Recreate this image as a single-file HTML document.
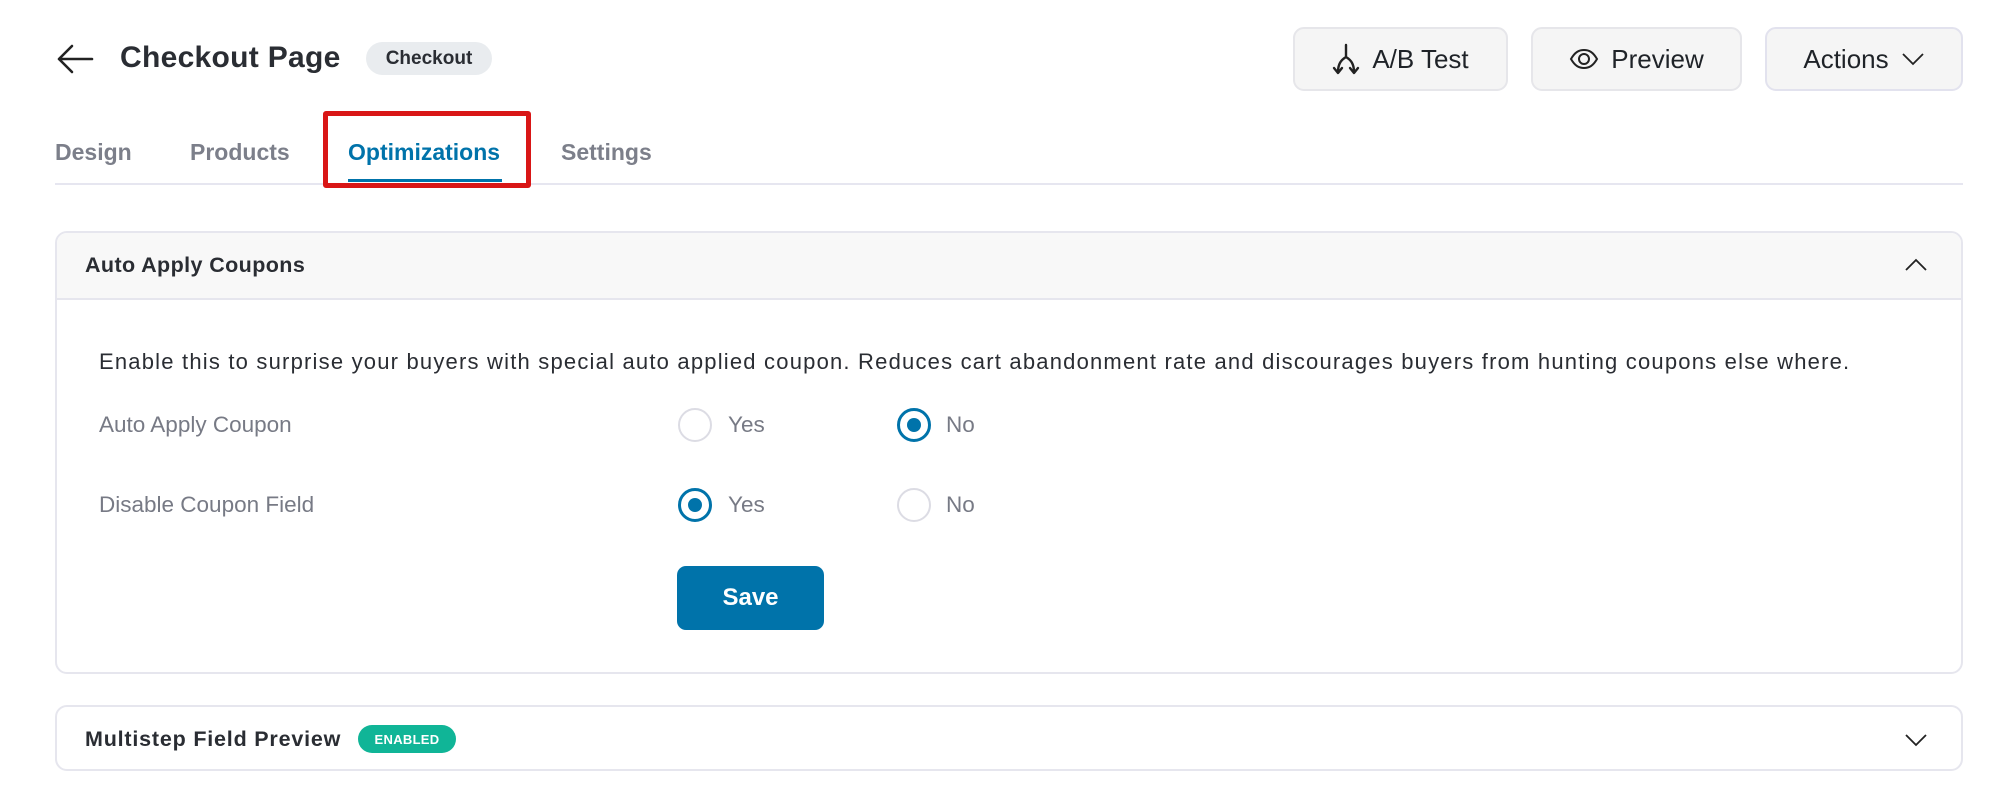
<!DOCTYPE html>
<html><head><meta charset="utf-8"><style>
*{box-sizing:border-box;margin:0;padding:0}
body{width:1999px;height:796px;background:#fff;font-family:"Liberation Sans",sans-serif;position:relative;overflow:hidden;color:#1f2328}
.a{position:absolute}
.btn{position:absolute;top:27px;height:64px;background:#f5f5f5;border:2px solid #e6e6ea;border-radius:11px;display:flex;align-items:center;justify-content:center;font-size:26px;color:#1f2328;gap:12px}
.tab{position:absolute;top:139px;font-size:23px;color:#7c7f8a;font-weight:600}
.radio{position:absolute;width:34px;height:34px;border-radius:50%;border:2px solid #dcdce4;background:#fff}
.radio.on{border:3px solid #0073aa}
.radio.on::after{content:"";position:absolute;left:7px;top:7px;width:14px;height:14px;border-radius:50%;background:#0073aa}
.lbl{position:absolute;font-size:22.5px;color:#777a85}
.opt{position:absolute;font-size:22.5px;color:#777a85}
</style></head><body>
<svg class="a" style="left:56px;top:44px" width="38" height="30" viewBox="0 0 38 30"><path d="M36 15H3M16 2L3 15l13 13" fill="none" stroke="#222" stroke-width="2.6" stroke-linecap="round" stroke-linejoin="round"/></svg>
<div class="a" style="left:120px;top:41px;font-size:30px;font-weight:600;color:#2a2d33;letter-spacing:0.3px">Checkout Page</div>
<div class="a" style="left:366px;top:42px;width:126px;height:33px;border-radius:17px;background:#e9ecef;font-size:19px;font-weight:600;color:#2a2d33;display:flex;align-items:center;justify-content:center">Checkout</div>

<div class="btn" style="left:1293px;width:215px"><svg width="28" height="32" viewBox="0 0 28 32"><path d="M14 2v12M14 14c-5 3-8 7-8 15M14 14c5 3 8 7 8 15M2 25l4 5 4-5M18 25l4 5 4-5" fill="none" stroke="#222" stroke-width="2.4" stroke-linecap="round" stroke-linejoin="round"/></svg>A/B Test</div>
<div class="btn" style="left:1531px;width:211px"><svg width="30" height="22" viewBox="0 0 30 22"><path d="M2 11C6 4 10 2 15 2s9 2 13 9c-4 7-8 9-13 9S6 18 2 11z" fill="none" stroke="#222" stroke-width="2"/><circle cx="15" cy="11" r="5" fill="none" stroke="#222" stroke-width="2"/></svg>Preview</div>
<div class="btn" style="left:1765px;width:198px;border-color:#e2e2ee">Actions <svg width="24" height="14" viewBox="0 0 24 14"><path d="M2 2l10 10L22 2" fill="none" stroke="#222" stroke-width="1.8"/></svg></div>

<div class="tab" style="left:55px">Design</div>
<div class="tab" style="left:190px">Products</div>
<div class="tab" style="left:348px;color:#0073aa">Optimizations</div>
<div class="tab" style="left:561px">Settings</div>
<div class="a" style="left:55px;top:183px;width:1908px;height:2px;background:#e6e6f0"></div>
<div class="a" style="left:348px;top:179px;width:154px;height:3px;background:#0073aa"></div>
<div class="a" style="left:323px;top:111px;width:208px;height:77px;border:5px solid #d91616;border-radius:3px"></div>

<div class="a" style="left:55px;top:231px;width:1908px;height:443px;border:2px solid #e6e6ee;border-radius:12px;overflow:hidden">
  <div style="height:67px;background:#f8f8f8;border-bottom:2px solid #e6e6ee"></div>
</div>
<div class="a" style="left:85px;top:253px;font-size:21.5px;font-weight:600;color:#2a2d33;letter-spacing:0.4px">Auto Apply Coupons</div>
<svg class="a" style="left:1904px;top:258px" width="24" height="14" viewBox="0 0 24 14"><path d="M2 12L12 2l10 10" fill="none" stroke="#222" stroke-width="1.8"/></svg>

<div class="a" style="left:99px;top:349px;font-size:22px;letter-spacing:1.2px;color:#2a2d33;white-space:nowrap">Enable this to surprise your buyers with special auto applied coupon. Reduces cart abandonment rate and discourages buyers from hunting coupons else where.</div>

<div class="lbl" style="left:99px;top:412px">Auto Apply Coupon</div>
<div class="radio" style="left:678px;top:408px"></div><div class="opt" style="left:728px;top:412px">Yes</div>
<div class="radio on" style="left:897px;top:408px"></div><div class="opt" style="left:946px;top:412px">No</div>

<div class="lbl" style="left:99px;top:492px">Disable Coupon Field</div>
<div class="radio on" style="left:678px;top:488px"></div><div class="opt" style="left:728px;top:492px">Yes</div>
<div class="radio" style="left:897px;top:488px"></div><div class="opt" style="left:946px;top:492px">No</div>

<div class="a" style="left:677px;top:566px;width:147px;height:64px;background:#0073aa;border-radius:9px;color:#fff;font-size:24px;font-weight:700;display:flex;align-items:center;justify-content:center">Save</div>

<div class="a" style="left:55px;top:705px;width:1908px;height:66px;border:2px solid #e6e6ee;border-radius:12px"></div>
<div class="a" style="left:85px;top:727px;font-size:21.5px;font-weight:600;color:#2a2d33;letter-spacing:0.8px">Multistep Field Preview</div>
<div class="a" style="left:358px;top:725px;width:98px;height:28px;border-radius:14px;background:#10b597;color:#fff;font-size:13px;font-weight:700;display:flex;align-items:center;justify-content:center;letter-spacing:.3px">ENABLED</div>
<svg class="a" style="left:1904px;top:733px" width="24" height="14" viewBox="0 0 24 14"><path d="M2 2l10 10L22 2" fill="none" stroke="#222" stroke-width="1.8"/></svg>
</body></html>
